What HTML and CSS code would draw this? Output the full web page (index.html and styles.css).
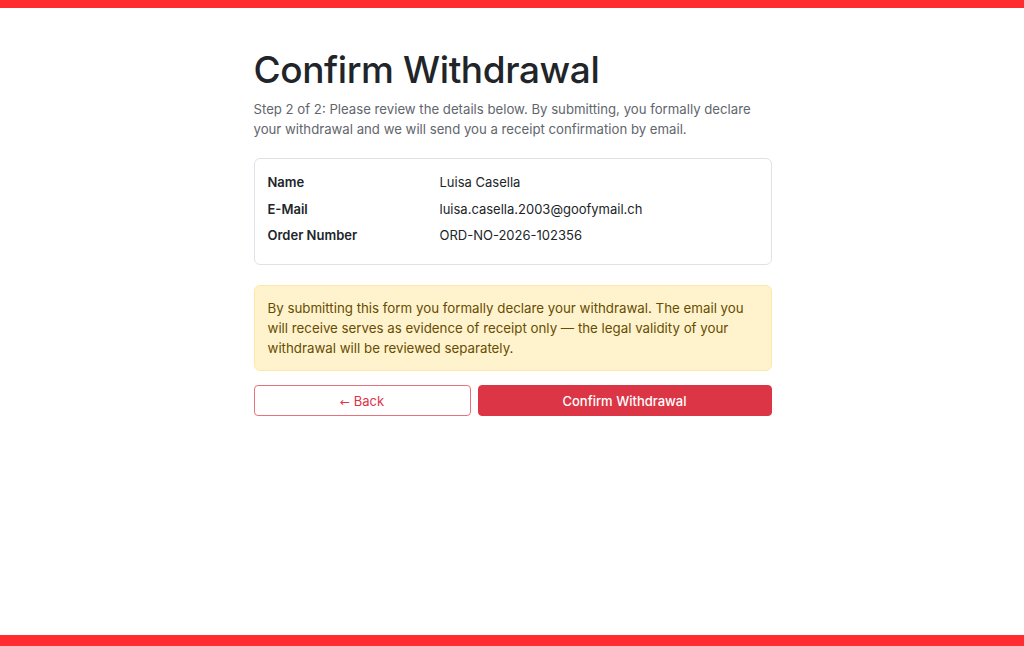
FILE: index.html
```html
<!DOCTYPE html>
<html>
<head>
    <title>Confirm Withdrawal</title>
    <link rel="stylesheet" href="styles.css">
</head>
<body>
    <div class="top-bar"></div>

    <main class="page">
        <h1>Confirm Withdrawal</h1>
        <p class="lead">Step 2 of 2: Please review the details below. By submitting, you formally declare your withdrawal and we will send you a receipt confirmation by email.</p>

        <div class="summary-card">
            <dl class="summary">
                <dt>Name</dt>
                <dd>Luisa Casella</dd>
                <dt>E-Mail</dt>
                <dd>luisa.casella.2003@goofymail.ch</dd>
                <dt>Order Number</dt>
                <dd>ORD-NO-2026-102356</dd>
            </dl>
        </div>

        <div class="notice">
            By submitting this form you formally declare your withdrawal. The email you will receive serves as evidence of receipt only — the legal validity of your withdrawal will be reviewed separately.
        </div>

        <div class="actions">
            <button type="button" class="btn btn-back"><span class="arrow">&larr;</span> Back</button>
            <button type="submit" class="btn btn-confirm">Confirm Withdrawal</button>
        </div>
    </main>

    <div class="bottom-bar"></div>
</body>
</html>
```

FILE: styles.css
```css
:root {
    --brand-red: #ff2d2f;
    --text-color: #212529;
    --muted-color: #5f666d;
    --border-color: #dee2e6;
    --danger: #dc3545;
    --warning-bg: #fff3cd;
    --warning-border: #ffe8a6;
    --warning-text: #664d03;
}

html, body { height: 100%; }

body {
    margin: 0;
    font-family: Inter, "Liberation Sans", Arial, sans-serif;
    font-size: 13.2px;
    line-height: 20px;
    color: var(--text-color);
    background: #fff;
    display: flex;
    flex-direction: column;
}

.top-bar { height: 8px; background: var(--brand-red); flex: none; }
.bottom-bar { height: 11px; background: var(--brand-red); flex: none; margin-top: auto; }

/* --- CONTENT --- */
.page {
    width: 518px;
    margin: 0 auto;
    padding: 40px 0 0 1px;
}

h1 {
    font-size: 37px;
    font-weight: 500;
    line-height: 44px;
    margin: 0 0 7px;
    letter-spacing: -0.4px;
}

.lead {
    margin: 0 0 19px;
    color: var(--muted-color);
}

/* --- SUMMARY CARD --- */
.summary-card {
    border: 1px solid var(--border-color);
    border-radius: 6px;
    padding: 13px 13px 19px;
}

.summary {
    display: grid;
    grid-template-columns: 172px 1fr;
    row-gap: 6.5px;
    margin: 0;
    font-size: 13px;
}
.summary dt { font-weight: 600; }
.summary dd { margin: 0; }

/* --- NOTICE --- */
.notice {
    margin-top: 20px;
    background: var(--warning-bg);
    border: 1px solid var(--warning-border);
    border-radius: 6px;
    padding: 12px 14px 12px 13px;
    color: var(--warning-text);
    font-size: 13.3px;
}

/* --- BUTTONS --- */
.actions {
    display: flex;
    gap: 7px;
    margin-top: 14px;
}

.btn {
    height: 31px;
    border-radius: 4px;
    font-family: inherit;
    font-size: 13px;
    cursor: pointer;
    box-sizing: border-box;
}
.btn-back {
    flex: 0 0 217px;
    background: #fff;
    color: var(--danger);
    border: 1px solid #e8737c;
}
.btn-back .arrow { font-family: "DejaVu Sans", sans-serif; font-size: 12px; }
.btn-confirm {
    flex: 1;
    background: var(--danger);
    color: #fff;
    border: 1px solid var(--danger);
    font-weight: 500;
}
```
